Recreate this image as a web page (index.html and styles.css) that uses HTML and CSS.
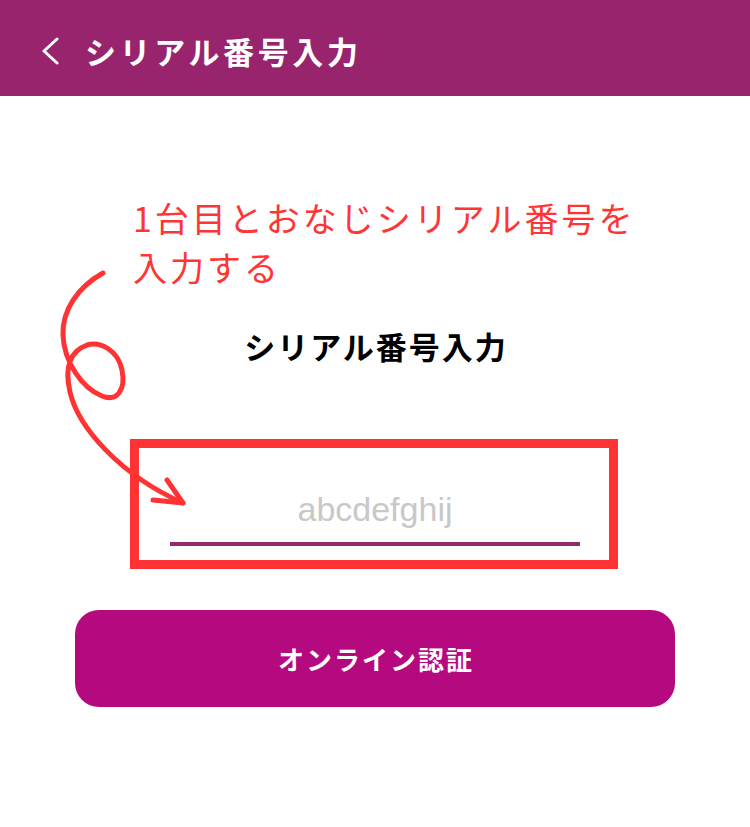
FILE: index.html
```html
<!DOCTYPE html>
<html lang="ja">
<head>
<meta charset="utf-8">
<title>シリアル番号入力</title>
<link rel="stylesheet" href="styles.css">
</head>
<body>
<header class="app-bar">
  <svg class="back-icon" width="18" height="28" viewBox="0 0 18 28" aria-hidden="true">
    <path d="M15 2 L2 14 L15 26" fill="none" stroke="#fff" stroke-width="3" stroke-linecap="round" stroke-linejoin="round"/>
  </svg>
  <h1 class="app-title">シリアル番号入力</h1>
</header>
<main class="page">
  <svg class="annotation-arrow" width="750" height="731" viewBox="0 96 750 731" aria-hidden="true">
    <path d="M103,273 C78,287 62,310 63,335 C64,362 82,388 102,396 C117,402 126,390 122,370 C118,350 100,341 87,345 C71,351 64,366 70,392 C78,427 120,475 183,503" fill="none" stroke="#ff3333" stroke-width="5" stroke-linecap="round" stroke-linejoin="round"/>
    <path d="M167,480 L183,503 L153,500" fill="none" stroke="#ff3333" stroke-width="5" stroke-linecap="round" stroke-linejoin="round"/>
  </svg>
  <p class="note">1台目とおなじシリアル番号を<br>入力する</p>
  <h2 class="form-title">シリアル番号入力</h2>
  <div class="highlight">
    <input class="serial-input" type="text" placeholder="abcdefghij">
  </div>
  <button class="submit" type="button">オンライン認証</button>
</main>
</body>
</html>
```

FILE: styles.css
```css
* {
  box-sizing: border-box;
}

body {
  margin: 0;
  background: #ffffff;
  font-family: "Noto Sans CJK JP", "Noto Sans", sans-serif;
}

.app-bar {
  height: 96px;
  background: #98246d;
  display: flex;
  align-items: center;
  padding: 6px 0 0 42px;
  gap: 25px;
}

.back-icon {
  flex: none;
  margin-top: -1px;
}

.app-title {
  margin: 0;
  color: #ffffff;
  font-size: 31px;
  font-weight: 700;
  letter-spacing: 3.6px;
  line-height: 1.2;
}

.page {
  position: relative;
  display: flex;
  flex-direction: column;
  align-items: center;
  padding-top: 97px;
}

.annotation-arrow {
  position: absolute;
  top: 0;
  left: 0;
  pointer-events: none;
}

.note {
  align-self: stretch;
  margin: 0;
  padding-left: 133px;
  color: #ff3535;
  font-size: 34px;
  font-weight: 400;
  line-height: 49px;
  letter-spacing: 3px;
}

.form-title {
  margin: 35px 0 0;
  padding-left: 2px;
  color: #000000;
  font-size: 31px;
  font-weight: 700;
  line-height: 40px;
  letter-spacing: 2px;
}

.highlight {
  margin-top: 73px;
  width: 488px;
  border: 9px solid #ff3333;
  padding: 42px 29px 14px 31px;
  margin-left: -2px;
}

.serial-input {
  display: block;
  width: 410px;
  height: 56px;
  margin: 0;
  padding: 0 0 14px;
  border: none;
  border-bottom: 4px solid #932a6e;
  background: transparent;
  font-family: "Liberation Sans", Arial, sans-serif;
  font-size: 34px;
  line-height: 38px;
  text-align: center;
  color: #333333;
  outline: none;
}

.serial-input::placeholder {
  color: #c8c8c8;
}

.submit {
  margin-top: 41px;
  width: 600px;
  height: 97px;
  border: none;
  border-radius: 24px;
  background: #b5097f;
  color: #ffffff;
  font-family: "Noto Sans CJK JP", "Noto Sans", sans-serif;
  font-size: 26px;
  font-weight: 700;
  letter-spacing: 2px;
  padding: 0 0 0 2px;
}
```
